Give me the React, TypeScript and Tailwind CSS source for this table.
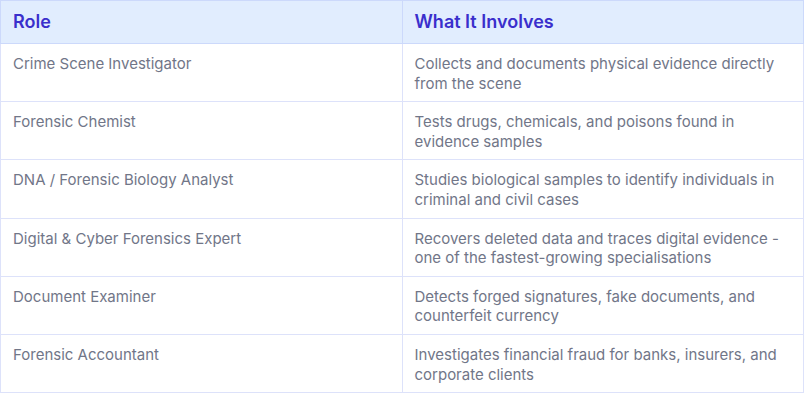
import React from "react";

const rows = [
  {
    role: "Crime Scene Investigator",
    what: "Collects and documents physical evidence directly from the scene",
  },
  {
    role: "Forensic Chemist",
    what: "Tests drugs, chemicals, and poisons found in evidence samples",
  },
  {
    role: "DNA / Forensic Biology Analyst",
    what: "Studies biological samples to identify individuals in criminal and civil cases",
  },
  {
    role: "Digital & Cyber Forensics Expert",
    what: "Recovers deleted data and traces digital evidence - one of the fastest-growing specialisations",
  },
  {
    role: "Document Examiner",
    what: "Detects forged signatures, fake documents, and counterfeit currency",
  },
  {
    role: "Forensic Accountant",
    what: "Investigates financial fraud for banks, insurers, and corporate clients",
  },
];

export default function App() {
  return (
    <div className="w-[804px] bg-white font-['Inter','Liberation_Sans',sans-serif]">
      <table className="w-full table-fixed border-collapse border border-[#dde2fa]">
        <thead>
          <tr className="bg-[#e1edfe]">
            <th className="w-1/2 border border-[#ccd9fb] px-3 py-[9px] text-left text-lg leading-6 font-semibold text-[#3a2fcc]">
              Role
            </th>
            <th className="w-1/2 border border-[#ccd9fb] px-3 py-[9px] text-left text-lg leading-6 font-semibold text-[#3a2fcc]">
              What It Involves
            </th>
          </tr>
        </thead>
        <tbody>
          {rows.map((row) => (
            <tr key={row.role}>
              {/* Role */}
              <td className="border border-[#dde2fa] px-3 pt-[10px] pb-[8px] align-top text-[15px] leading-[19.6px] text-[#717688]">
                {row.role}
              </td>
              {/* Description */}
              <td className="border border-[#dde2fa] px-3 pt-[10px] pb-[8px] align-top text-[15px] leading-[19.6px] text-[#717688]">
                {row.what}
              </td>
            </tr>
          ))}
        </tbody>
      </table>
    </div>
  );
}
